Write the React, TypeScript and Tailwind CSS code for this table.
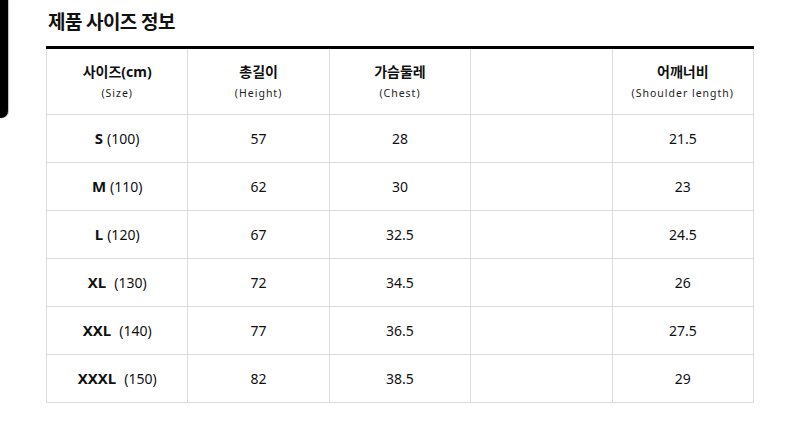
const rows = [
  { size: "S", cm: "(100)", gap: false, height: "57", chest: "28", shoulder: "21.5" },
  { size: "M", cm: "(110)", gap: false, height: "62", chest: "30", shoulder: "23" },
  { size: "L", cm: "(120)", gap: false, height: "67", chest: "32.5", shoulder: "24.5" },
  { size: "XL", cm: "(130)", gap: true, height: "72", chest: "34.5", shoulder: "26" },
  { size: "XXL", cm: "(140)", gap: true, height: "77", chest: "36.5", shoulder: "27.5" },
  { size: "XXXL", cm: "(150)", gap: true, height: "82", chest: "38.5", shoulder: "29" },
];

const headers = [
  { ko: "사이즈(cm)", en: "(Size)" },
  { ko: "총길이", en: "(Height)" },
  { ko: "가슴둘레", en: "(Chest)" },
  { ko: "", en: "" },
  { ko: "어깨너비", en: "(Shoulder length)" },
];

const cell = "border border-[#dcdcdc] text-center align-middle";

export default function App() {
  return (
    <div
      className="relative h-[430px] w-[800px] overflow-hidden bg-white text-[#111]"
      style={{ fontFamily: '"Noto Sans", "Noto Sans CJK KR", sans-serif' }}
    >
      {/* dark edge of a neighbouring panel */}
      <div className="absolute left-0 top-0 h-[118px] w-[8px] rounded-br-[7px] bg-black shadow-[1px_0_1px_#bbb]" />

      <div className="pl-[46px] pt-[8px]">
        <h2 className="pl-[2px] text-[19px] font-bold leading-[28px] tracking-[-0.6px]">
          제품 사이즈 정보
        </h2>

        <table className="mt-[10px] w-[708px] table-fixed border-collapse border-t-[3px] border-t-black">
          <thead>
            <tr className="h-[67px]">
              {headers.map((h, i) => (
                <th key={i} className={`${cell} border-t-0 font-normal`}>
                  {h.ko && (
                    <>
                      <div className="text-[14px] font-bold leading-[18px]">{h.ko}</div>
                      <div className="mt-[5px] text-[10.5px] leading-[14px] tracking-[1px] text-[#222]">
                        {h.en}
                      </div>
                    </>
                  )}
                </th>
              ))}
            </tr>
          </thead>
          <tbody className="text-[14px]">
            {rows.map((r) => (
              <tr key={r.size} className="h-[48px]">
                <td className={cell}>
                  <span className="text-[15px] font-bold">{r.size}</span>
                  <span className={r.gap ? "ml-[8px]" : "ml-[4px]"}>{r.cm}</span>
                </td>
                <td className={cell}>{r.height}</td>
                <td className={cell}>{r.chest}</td>
                <td className={cell}></td>
                <td className={cell}>{r.shoulder}</td>
              </tr>
            ))}
          </tbody>
        </table>
      </div>
    </div>
  );
}
